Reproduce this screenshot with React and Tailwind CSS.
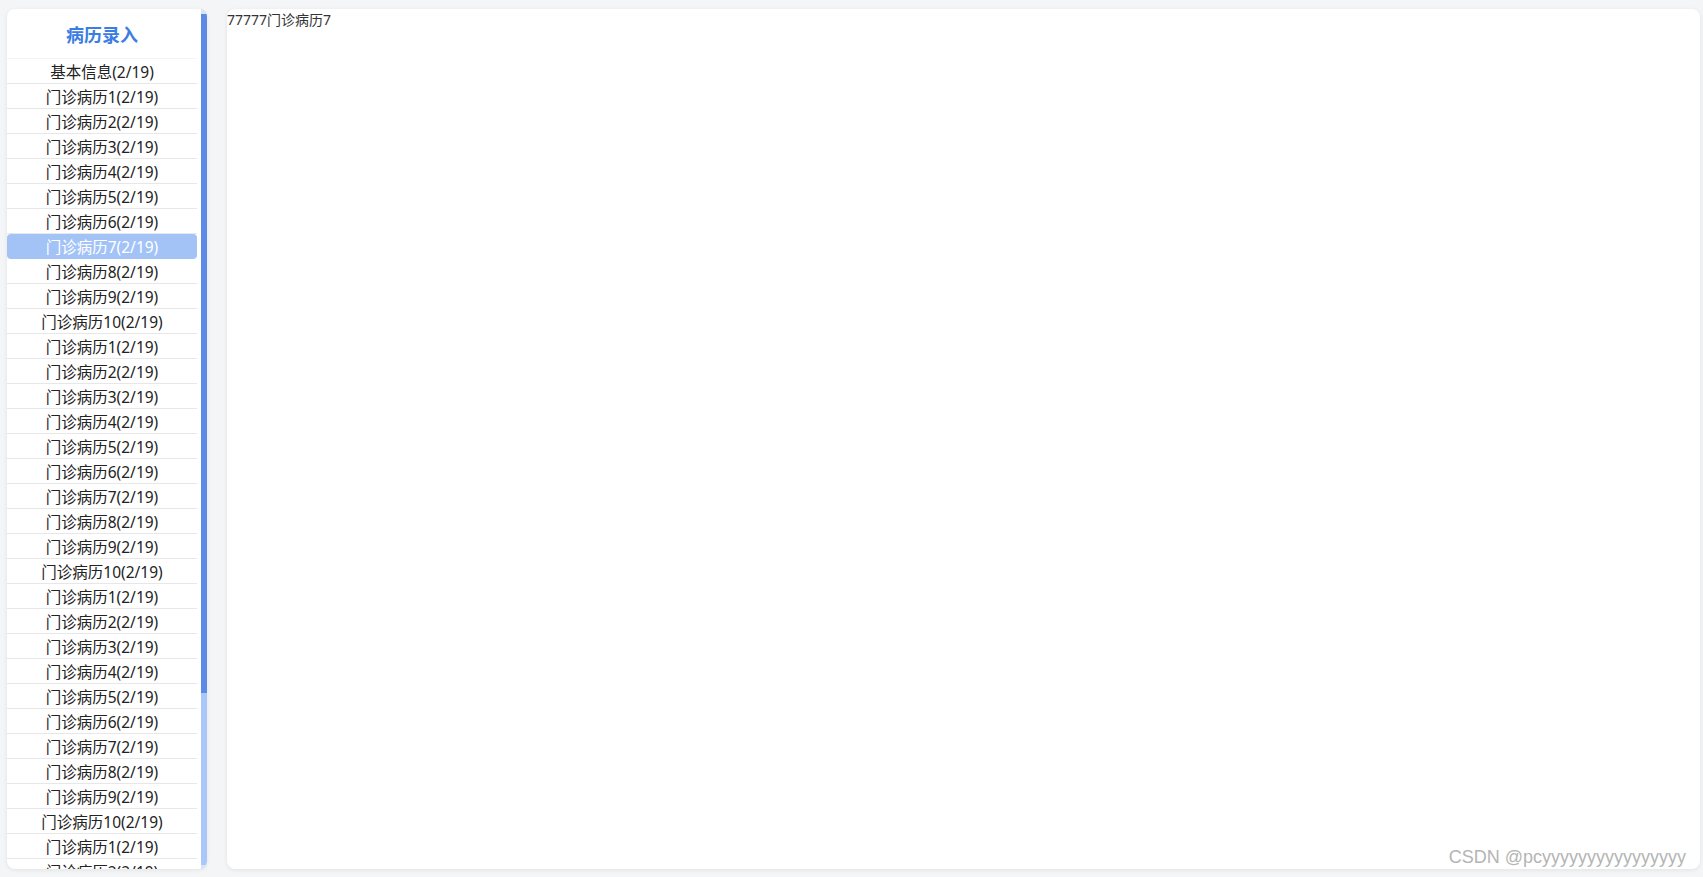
import React from 'react'

const ROWS = [
  '基本信息(2/19)',
  ...[0, 1, 2, 3].flatMap(() =>
    [1, 2, 3, 4, 5, 6, 7, 8, 9, 10].map(n => `门诊病历${n}(2/19)`)
  ),
]

const ACTIVE = 7

export default function App() {
  return (
    <div
      className="flex h-[877px] w-full gap-[20px] overflow-hidden bg-[#f4f5f7] pt-[9px] pb-[8px] pl-[7px] pr-[3px]"
      style={{ fontFamily: '"Noto Sans", "Noto Sans CJK SC", sans-serif' }}
    >
      {/* Sidebar */}
      <div className="flex w-[200px] shrink-0 overflow-hidden rounded-lg bg-white shadow-[0_1px_4px_rgba(0,0,0,0.08)]">
        <div className="flex w-[190px] shrink-0 flex-col overflow-hidden">
          <div className="flex h-[49px] shrink-0 items-center justify-center pt-[4px] text-[18px] font-bold text-[#3b7de2]">
            病历录入
          </div>
          <div className="border-t border-[#f4f4f4]">
            {ROWS.map((r, i) =>
              i === ACTIVE ? (
                <div
                  key={i}
                  className="h-[25px] rounded-[4px] bg-[#a3c3f7] pt-[2px] text-center text-[15.5px] leading-[22px] text-white"
                >
                  {r}
                </div>
              ) : (
                <div
                  key={i}
                  className="h-[25px] border-b border-[#e7e7e7] pt-[2px] text-center text-[15.5px] leading-[22px] text-[#222]"
                >
                  {r}
                </div>
              )
            )}
          </div>
        </div>
        <div className="w-[4px] shrink-0" />
        {/* scrollbar */}
        <div className="flex w-[6px] shrink-0 flex-col bg-[#a9c7f8]">
          <div className="h-[5px] bg-[#d8e4f8]" />
          <div className="h-[679px] bg-[#5d8ae6]" />
          <div className="flex-1" />
          <div className="h-[4px] bg-[#d8e4f8]" />
        </div>
      </div>

      {/* Main panel */}
      <div className="relative flex-1 rounded-lg bg-white shadow-[0_1px_4px_rgba(0,0,0,0.08)]">
        <div className="pt-[1px] text-[14px] leading-[20px] text-[#333]">77777门诊病历7</div>
        <div
          className="absolute right-[14px] bottom-[1px] text-[18px] leading-[22px] text-[#b4b4b4]"
          style={{ fontFamily: '"Liberation Sans", Arial, sans-serif' }}
        >
          CSDN @pcyyyyyyyyyyyyyyyy
        </div>
      </div>
    </div>
  )
}
